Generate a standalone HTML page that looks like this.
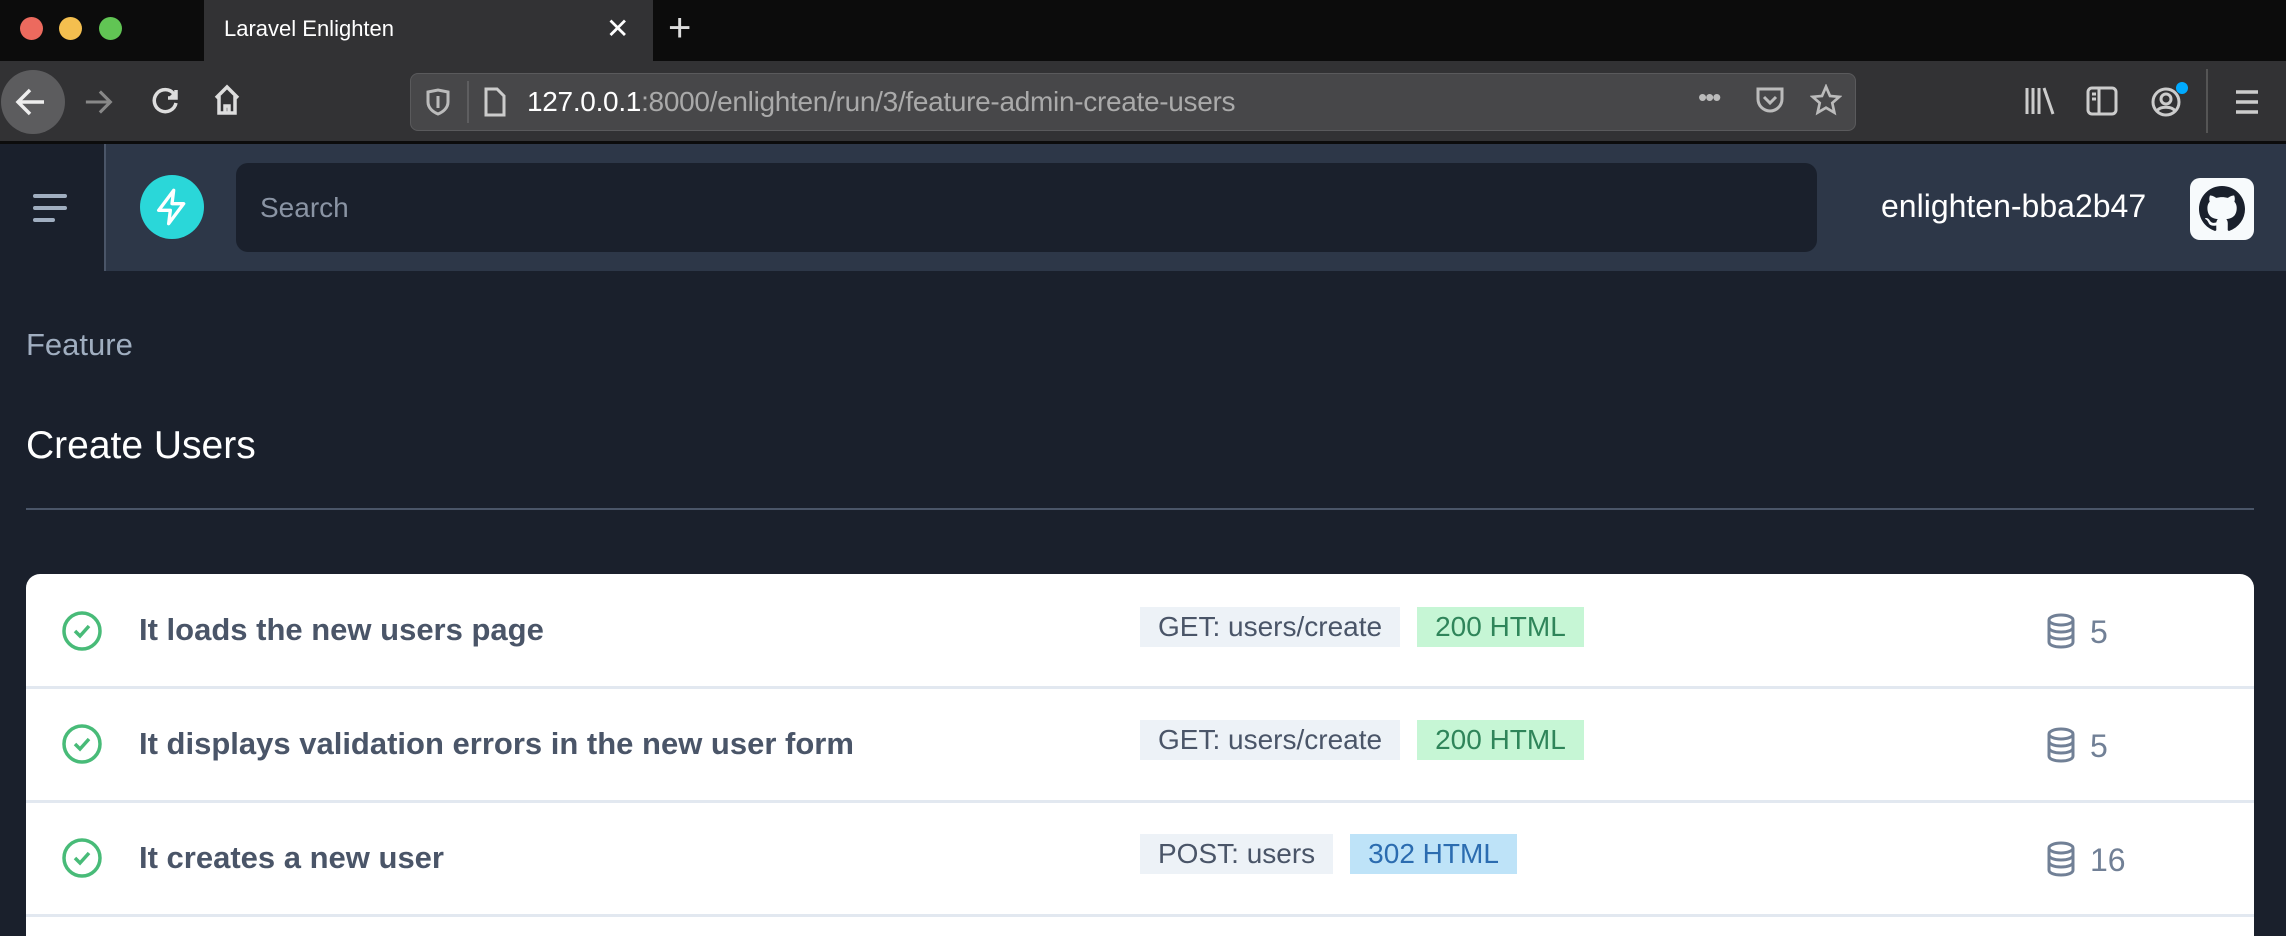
<!DOCTYPE html>
<html style="width:2286px;height:936px;overflow:hidden"><head><meta charset="utf-8"><style>
*{margin:0;padding:0;box-sizing:border-box}
body{width:2286px;height:936px;overflow:hidden;background:#1a202c;font-family:"Liberation Sans",sans-serif;position:relative}
.a{position:absolute}
.t{white-space:nowrap}
.bw{position:absolute;left:1140px;display:flex;gap:17px}
.badge{height:40px;line-height:40px;font-size:28px;padding:0 18px;white-space:nowrap}
.row{position:absolute;left:26px;width:2228px;border-bottom:3px solid #e2e8f0}
</style></head><body>
<div class="a" style="left:0;top:0;width:2286px;height:61px;background:#0c0c0c"></div>
<div class="a" style="left:20px;top:17px;width:23px;height:23px;border-radius:50%;background:#ec6a5e"></div>
<div class="a" style="left:59px;top:17px;width:23px;height:23px;border-radius:50%;background:#f4bf4f"></div>
<div class="a" style="left:99px;top:17px;width:23px;height:23px;border-radius:50%;background:#61c554"></div>
<div class="a" style="left:204px;top:0;width:449px;height:61px;background:#323234"></div>
<div class="a t" style="left:224px;top:16px;font-size:22px;color:#fff">Laravel Enlighten</div>
<div class="a t" style="left:606px;top:12px;font-size:28px;color:#fff">✕</div>
<div class="a t" style="left:668px;top:6px;font-size:40px;color:#ddd;font-weight:300">+</div>
<div class="a" style="left:0;top:61px;width:2286px;height:80px;background:#323234"></div>
<div class="a" style="left:1px;top:70px;width:64px;height:64px;border-radius:50%;background:#5c5c5e"></div>
<svg class="a" style="left:14px;top:86px" width="34" height="32" viewBox="0 0 34 32" fill="none" stroke="#eee" stroke-width="3.5"><path d="M30 16H4M16 4L4 16l12 12"/></svg>
<svg class="a" style="left:84px;top:88px" width="30" height="28" viewBox="0 0 34 32" fill="none" stroke="#888" stroke-width="3.5"><path d="M2 16h28M18 4l12 12-12 12"/></svg>
<svg class="a" style="left:150px;top:86px" width="30" height="30" viewBox="0 0 30 30" fill="none" stroke="#ddd" stroke-width="3.5"><path d="M24 8A11 11 0 1 0 26 17"/><path d="M26 4v8h-8" fill="#ddd"/></svg>
<svg class="a" style="left:212px;top:84px" width="30" height="32" viewBox="0 0 30 32" fill="none" stroke="#ddd" stroke-width="3.5"><path d="M4 14L15 3l11 11M7 12v17h16V12M13 29v-7h4v7"/></svg>
<div class="a" style="left:410px;top:73px;width:1446px;height:58px;border-radius:8px;background:#474749;border:1px solid #5a5a5c"></div>
<svg class="a" style="left:426px;top:88px" width="24" height="28" viewBox="0 0 24 28" fill="none" stroke="#bbb" stroke-width="3"><path d="M2 4l10-2 10 2v10c0 6-5 10-10 12C7 24 2 20 2 14z"/><path d="M12 8v12"/></svg>
<div class="a" style="left:467px;top:81px;width:2px;height:42px;background:#5e5e60"></div>
<svg class="a" style="left:483px;top:86px" width="24" height="32" viewBox="0 0 24 32" fill="none" stroke="#ccc" stroke-width="3"><path d="M3 3h11l7 7v19H3z"/></svg>
<div class="a t" style="left:527px;top:86px;font-size:28px;color:#fff;letter-spacing:-0.3px">127.0.0.1<span style="color:#aaa">:8000/enlighten/run/3/feature-admin-create-users</span></div>
<div class="a t" style="left:1698px;top:82px;font-size:26px;color:#bbb;letter-spacing:-2px">•••</div>
<svg class="a" style="left:1755px;top:86px" width="30" height="30" viewBox="0 0 30 30" fill="none" stroke="#bbb" stroke-width="3"><path d="M3 3h24v10a12 12 0 0 1-24 0z"/><path d="M9 11l6 6 6-6"/></svg>
<svg class="a" style="left:1810px;top:84px" width="32" height="32" viewBox="0 0 24 24" fill="none" stroke="#bbb" stroke-width="2"><path d="M12 2l3 7 7 .6-5.3 4.6 1.6 7.3L12 17.8 5.7 21.5l1.6-7.3L2 9.6 9 9z"/></svg>
<svg class="a" style="left:2024px;top:86px" width="32" height="30" viewBox="0 0 32 30" fill="none" stroke="#ccc" stroke-width="3"><path d="M3 2v26M9 2v26M15 2v26M20 2l9 26"/></svg>
<svg class="a" style="left:2086px;top:86px" width="32" height="30" viewBox="0 0 32 30" fill="none" stroke="#ccc" stroke-width="3"><rect x="2" y="2" width="28" height="26" rx="4"/><path d="M13 2v26M6 8h4M6 13h4"/></svg>
<svg class="a" style="left:2150px;top:84px" width="34" height="34" viewBox="0 0 34 34" fill="none" stroke="#ccc" stroke-width="3"><circle cx="16" cy="18" r="13"/><circle cx="16" cy="15" r="5"/><path d="M7 27c3-5 15-5 18 0"/></svg>
<div class="a" style="left:2176px;top:82px;width:12px;height:12px;border-radius:50%;background:#0af"></div>
<div class="a" style="left:2206px;top:69px;width:2px;height:64px;background:#555"></div>
<svg class="a" style="left:2234px;top:89px" width="26" height="26" viewBox="0 0 26 26" stroke="#ccc" stroke-width="3.5"><path d="M2 3h22M2 13h22M2 23h22"/></svg>
<div class="a" style="left:0;top:141px;width:2286px;height:3px;background:#0c0c0c"></div>
<div class="a" style="left:0;top:144px;width:2286px;height:127px;background:#2d3748"></div>
<div class="a" style="left:0;top:144px;width:106px;height:127px;background:#1a202c;border-right:2px solid #4a5568"></div>
<svg class="a" style="left:32px;top:192px" width="36" height="32" viewBox="0 0 36 32" stroke="#a0aec0" stroke-width="4" stroke-linecap="round"><path d="M3 4h30M3 16h30M3 28h18"/></svg>
<div class="a" style="left:140px;top:175px;width:64px;height:64px;border-radius:50%;background:#2ad7d9"></div>
<svg class="a" style="left:152px;top:187px" width="40" height="40" viewBox="0 0 24 24" fill="none" stroke="#fff" stroke-width="2" stroke-linejoin="round"><path d="M13 2L4 14h7l-1 8 9-12h-7z"/></svg>
<div class="a" style="left:236px;top:163px;width:1581px;height:89px;border-radius:12px;background:#1a202c"></div>
<div class="a t" style="left:260px;top:192px;font-size:28px;color:#8a94a4">Search</div>
<div class="a t" style="left:1881px;top:188px;font-size:32px;color:#fff">enlighten-bba2b47</div>
<div class="a" style="left:2190px;top:178px;width:64px;height:62px;border-radius:10px;background:#f7fafc"></div>
<svg class="a" style="left:2199px;top:186px" width="46" height="46" viewBox="0 0 16 16"><path fill="#1a202c" d="M8 0C3.58 0 0 3.58 0 8c0 3.54 2.29 6.53 5.47 7.59.4.07.55-.17.55-.38 0-.19-.01-.82-.01-1.49-2.01.37-2.53-.49-2.69-.94-.09-.23-.48-.94-.82-1.13-.28-.15-.68-.52-.01-.53.63-.01 1.08.58 1.23.82.72 1.21 1.87.87 2.33.66.07-.52.28-.87.51-1.07-1.78-.2-3.64-.89-3.64-3.95 0-.87.31-1.59.82-2.15-.08-.2-.36-1.02.08-2.12 0 0 .67-.21 2.2.82.64-.18 1.32-.27 2-.27.68 0 1.36.09 2 .27 1.53-1.04 2.2-.82 2.2-.82.44 1.1.16 1.92.08 2.12.51.56.82 1.27.82 2.15 0 3.07-1.87 3.75-3.65 3.95.29.25.54.73.54 1.48 0 1.07-.01 1.93-.01 2.2 0 .21.15.46.55.38A8.013 8.013 0 0016 8c0-4.42-3.58-8-8-8z"/></svg>
<div class="a t" style="left:26px;top:327px;font-size:31px;color:#a0aec0">Feature</div>
<div class="a t" style="left:26px;top:424px;font-size:39px;color:#fff">Create Users</div>
<div class="a" style="left:26px;top:508px;width:2228px;height:2px;background:#4a5568"></div>
<div class="a" style="left:26px;top:574px;width:2228px;height:362px;border-radius:14px 14px 0 0;background:#fff"></div>

<div class="row" style="top:574px;height:115px"></div>
<div class="row" style="top:689px;height:114px"></div>
<div class="row" style="top:803px;height:114px"></div>

<svg class="a" style="left:61px;top:610px" width="42" height="42" viewBox="0 0 42 42" fill="none" stroke="#48bb78" stroke-width="3.5"><circle cx="21" cy="21" r="18"/><path d="M14 21l5 5 9-10"/></svg>
<div class="a t" style="left:139px;top:612px;font-size:31px;color:#4a5568;font-weight:600">It loads the new users page</div>
<div class="bw" style="top:607px"><div class="badge" style="background:#edf2f7;color:#4a5568">GET: users/create</div><div class="badge" style="background:#c6f6d5;color:#2f855a">200 HTML</div></div>

<svg class="a" style="left:61px;top:723px" width="42" height="42" viewBox="0 0 42 42" fill="none" stroke="#48bb78" stroke-width="3.5"><circle cx="21" cy="21" r="18"/><path d="M14 21l5 5 9-10"/></svg>
<div class="a t" style="left:139px;top:726px;font-size:31px;color:#4a5568;font-weight:600">It displays validation errors in the new user form</div>
<div class="bw" style="top:720px"><div class="badge" style="background:#edf2f7;color:#4a5568">GET: users/create</div><div class="badge" style="background:#c6f6d5;color:#2f855a">200 HTML</div></div>

<svg class="a" style="left:61px;top:837px" width="42" height="42" viewBox="0 0 42 42" fill="none" stroke="#48bb78" stroke-width="3.5"><circle cx="21" cy="21" r="18"/><path d="M14 21l5 5 9-10"/></svg>
<div class="a t" style="left:139px;top:840px;font-size:31px;color:#4a5568;font-weight:600">It creates a new user</div>
<div class="bw" style="top:834px"><div class="badge" style="background:#edf2f7;color:#4a5568">POST: users</div><div class="badge" style="background:#bee3f8;color:#2b6cb0">302 HTML</div></div>

<svg class="a" style="left:2046px;top:613px" width="30" height="36" viewBox="0 0 30 36" fill="none" stroke="#718096" stroke-width="3"><ellipse cx="15" cy="7" rx="12" ry="5"/><path d="M3 7v22c0 3 5 5 12 5s12-2 12-5V7M3 14c0 3 5 5 12 5s12-2 12-5M3 21c0 3 5 5 12 5s12-2 12-5"/></svg>
<div class="a t" style="left:2090px;top:614px;font-size:32px;color:#718096">5</div>
<svg class="a" style="left:2046px;top:727px" width="30" height="36" viewBox="0 0 30 36" fill="none" stroke="#718096" stroke-width="3"><ellipse cx="15" cy="7" rx="12" ry="5"/><path d="M3 7v22c0 3 5 5 12 5s12-2 12-5V7M3 14c0 3 5 5 12 5s12-2 12-5M3 21c0 3 5 5 12 5s12-2 12-5"/></svg>
<div class="a t" style="left:2090px;top:728px;font-size:32px;color:#718096">5</div>
<svg class="a" style="left:2046px;top:841px" width="30" height="36" viewBox="0 0 30 36" fill="none" stroke="#718096" stroke-width="3"><ellipse cx="15" cy="7" rx="12" ry="5"/><path d="M3 7v22c0 3 5 5 12 5s12-2 12-5V7M3 14c0 3 5 5 12 5s12-2 12-5M3 21c0 3 5 5 12 5s12-2 12-5"/></svg>
<div class="a t" style="left:2090px;top:842px;font-size:32px;color:#718096">16</div>
</body></html>
